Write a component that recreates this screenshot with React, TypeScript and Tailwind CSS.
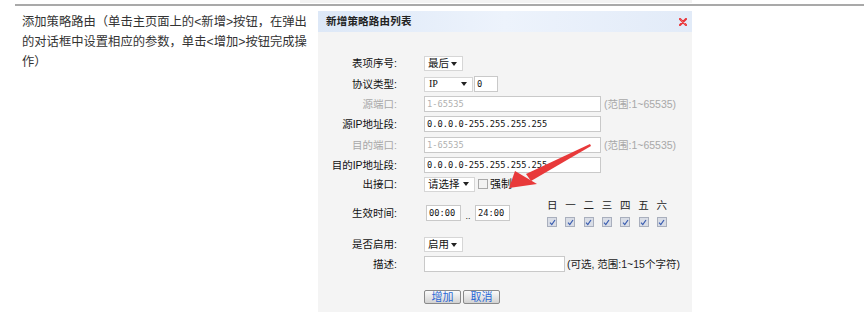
import React from "react";

const days = ["日", "一", "二", "三", "四", "五", "六"];

const Label = ({ text, muted }: { text: string; muted?: boolean }) => (
  <div
    className={`w-[80px] shrink-0 pr-[1px] text-right text-[10.5px] leading-none ${
      muted ? "text-[#a8a8a8]" : "text-[#111]"
    }`}
  >
    {text}
  </div>
);

const Arrow = () => (
  <span className="w-0 h-0 border-l-[3px] border-r-[3px] border-t-[4px] border-l-transparent border-r-transparent border-t-[#222]" />
);

const Select = ({ value, w }: { value: string; w: string }) => (
  <div
    className={`${w} h-[15px] bg-white border border-[#d6d6d6] flex items-center justify-between pl-[3px] pr-[5px]`}
  >
    <span className="text-[10.5px] leading-none text-[#111]">{value}</span>
    <Arrow />
  </div>
);

const Input = ({
  value,
  placeholder,
  w,
}: {
  value?: string;
  placeholder?: string;
  w: string;
}) => (
  <div
    className={`${w} h-[16px] bg-white border border-[#c9c9c9] flex items-center pl-[2px] font-['DejaVu_Sans_Mono',monospace] text-[8.7px] leading-none`}
  >
    {value ? (
      <span className="text-[#111]">{value}</span>
    ) : (
      <span className="text-[#b0b0b0]">{placeholder}</span>
    )}
  </div>
);

const Check = () => (
  <div className="w-[10px] h-[10px] bg-[#d9dde6] border border-[#a9afbd] flex items-center justify-center">
    <svg width="7" height="7" viewBox="0 0 7 7">
      <path d="M1 3.6 L2.8 5.6 L6 1" fill="none" stroke="#3a5db0" strokeWidth="1.2" />
    </svg>
  </div>
);

const Btn = ({ text }: { text: string }) => (
  <div className="w-[37px] h-[14px] rounded-[2px] border border-[#8a8a8a] bg-gradient-to-b from-[#fbfbfb] to-[#d2d2d2] flex items-center justify-center text-[11px] leading-none text-[#2a68d6]">
    {text}
  </div>
);

export default function App() {
  return (
    <div className="relative w-[864px] h-[314px] bg-white overflow-hidden font-['Liberation_Sans','Noto_Sans_CJK_SC',sans-serif]">
      <div className="ml-[300px] w-[392px] h-[3px] bg-[#f3f3f3]" />
      <div className="mt-[1px] ml-[15px] border-t-2 border-[#a9a9a9] flex">
        <div className="w-[303px] shrink-0 pl-[7px] pt-[6px]">
          <p className="w-[290px] text-[12.3px] leading-[20px] text-[#333]">
            添加策略路由（单击主页面上的&lt;新增&gt;按钮，在弹出的对话框中设置相应的参数，单击&lt;增加&gt;按钮完成操作）
          </p>
        </div>

        <div className="pt-[5px]">
          <div className="w-[374px] h-[301px] bg-[#f4f4f4] flex flex-col">
            <div className="h-[21px] bg-gradient-to-r from-[#dde8f7] via-[#edf3fc] to-[#e2ebf8] flex items-center justify-between pl-[8px] pr-[5px]">
              <span className="text-[10.5px] font-bold leading-none text-[#222] tracking-[0.2px]">
                新增策略路由列表
              </span>
              <svg width="8" height="8" viewBox="0 0 8 8">
                <path d="M1 1 L7 7 M7 1 L1 7" stroke="#e8363a" strokeWidth="2.2" strokeLinecap="round" />
                <path d="M1.5 1.5 L6.5 6.5" stroke="#f57c7c" strokeWidth="0.7" />
              </svg>
            </div>

            <div className="flex flex-col">
              <div className="mt-[24px] h-[15px] flex items-center">
                <Label text="表项序号:" />
                <div className="ml-[26px]">
                  <Select value="最后" w="w-[39px]" />
                </div>
              </div>

              <div className="mt-[5px] h-[16px] flex items-center">
                <Label text="协议类型:" />
                <div className="ml-[26px] flex items-center gap-[1px]">
                  <div className="w-[49px] h-[15px] bg-white border border-[#d6d6d6] flex items-center justify-between pl-[4px] pr-[5px]">
                    <span className="text-[10px] leading-none text-[#111] font-['Liberation_Serif',serif]">IP</span>
                    <Arrow />
                  </div>
                  <Input value="0" w="w-[24px]" />
                </div>
              </div>

              <div className="mt-[4px] h-[16px] flex items-center">
                <Label text="源端口:" muted />
                <div className="ml-[26px] flex items-center">
                  <Input placeholder="1-65535" w="w-[177px]" />
                  <span className="ml-[3px] text-[10.5px] leading-none text-[#a8a8a8]">(范围:1~65535)</span>
                </div>
              </div>

              <div className="mt-[4px] h-[16px] flex items-center">
                <Label text="源IP地址段:" />
                <div className="ml-[26px]">
                  <Input value="0.0.0.0-255.255.255.255" w="w-[177px]" />
                </div>
              </div>

              <div className="mt-[5px] h-[16px] flex items-center">
                <Label text="目的端口:" muted />
                <div className="ml-[26px] flex items-center">
                  <Input placeholder="1-65535" w="w-[177px]" />
                  <span className="ml-[3px] text-[10.5px] leading-none text-[#a8a8a8]">(范围:1~65535)</span>
                </div>
              </div>

              <div className="mt-[4px] h-[16px] flex items-center">
                <Label text="目的IP地址段:" />
                <div className="ml-[26px]">
                  <Input value="0.0.0.0-255.255.255.255" w="w-[177px]" />
                </div>
              </div>

              <div className="mt-[3px] h-[16px] flex items-center">
                <Label text="出接口:" />
                <div className="ml-[26px] flex items-center">
                  <Select value="请选择" w="w-[51px]" />
                  <div className="ml-[3px] w-[10px] h-[10px] bg-[#f2f2f2] border border-[#a9a9a9]" />
                  <span className="ml-[2px] text-[11px] leading-none text-[#111]">强制</span>
                </div>
              </div>

              <div className="mt-[7px] h-[28px] flex items-center">
                <Label text="生效时间:" />
                <div className="ml-[28px] flex items-center">
                  <Input value="00:00" w="w-[35px]" />
                  <span className="w-[14px] text-center text-[9px] leading-none text-[#222] pt-[6px]">..</span>
                  <Input value="24:00" w="w-[35px]" />
                  <div className="ml-[33px] w-[128px] grid grid-cols-7">
                    {days.map((d) => (
                      <div key={d} className="flex flex-col items-center">
                        <span className="h-[12px] text-[10.5px] leading-[12px] text-[#222]">{d}</span>
                        <div className="mt-[6px]">
                          <Check />
                        </div>
                      </div>
                    ))}
                  </div>
                </div>
              </div>

              <div className="mt-[10px] h-[15px] flex items-center">
                <Label text="是否启用:" />
                <div className="ml-[26px]">
                  <Select value="启用" w="w-[39px]" />
                </div>
              </div>

              <div className="mt-[4px] h-[16px] flex items-center">
                <Label text="描述:" />
                <div className="ml-[26px] flex items-center">
                  <Input w="w-[141px]" />
                  <span className="ml-[2px] text-[10.5px] leading-none text-[#222]">(可选, 范围:1~15个字符)</span>
                </div>
              </div>

              <div className="mt-[18px] h-[14px] flex items-center">
                <div className="w-[80px] shrink-0" />
                <div className="ml-[26px] flex items-center gap-[2px]">
                  <Btn text="增加" />
                  <Btn text="取消" />
                </div>
              </div>
            </div>
          </div>
        </div>
      </div>

      <svg
        className="absolute left-0 top-0 pointer-events-none"
        width="864"
        height="314"
        viewBox="0 0 864 314"
      >
        <polygon points="590,144 591,146 531,181 526,174" fill="#e8393a" />
        <polygon points="509,188 515,171 537,184" fill="#e8393a" />
      </svg>
    </div>
  );
}
